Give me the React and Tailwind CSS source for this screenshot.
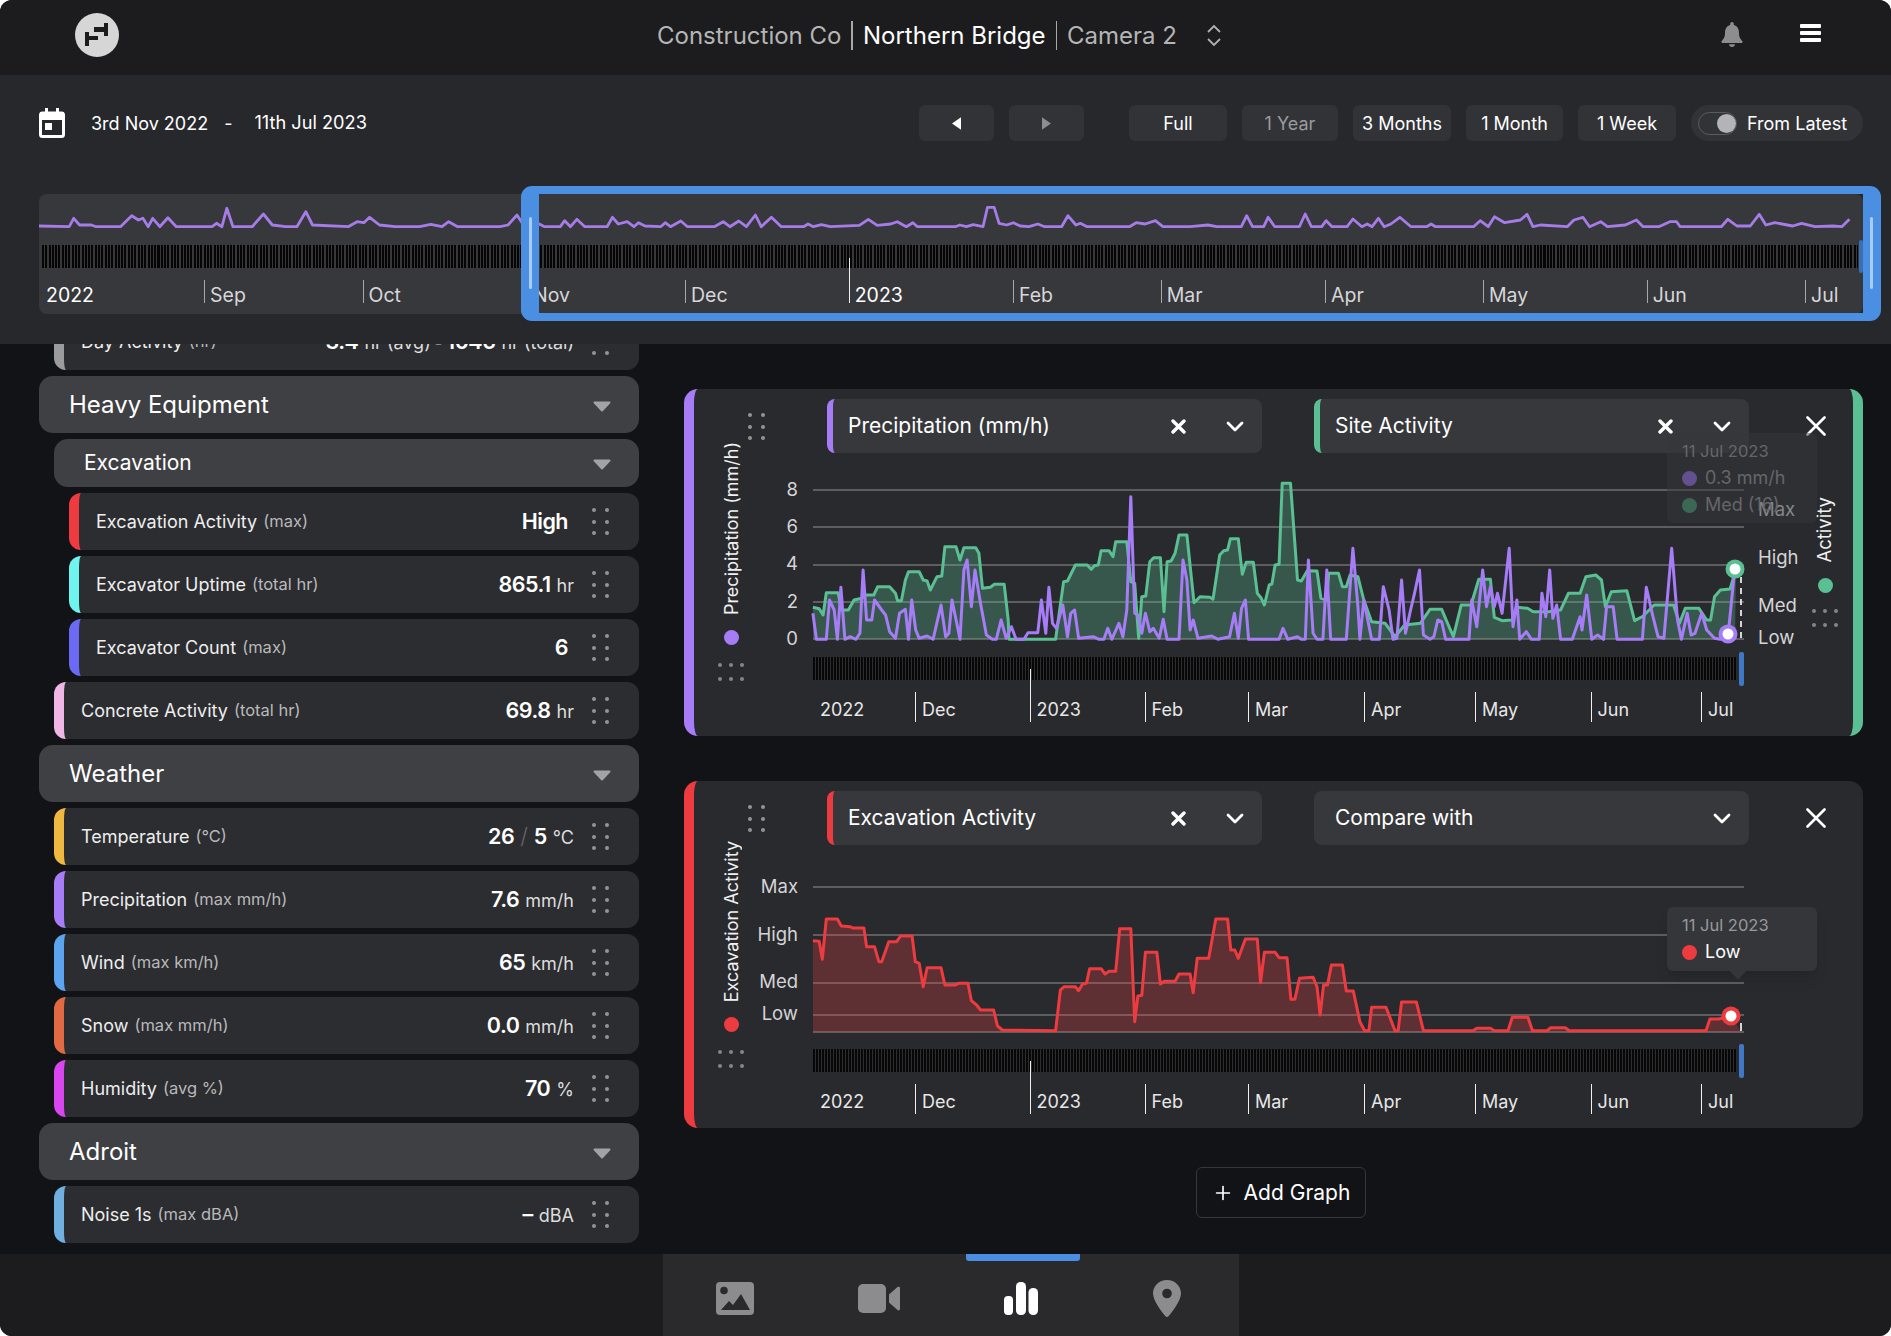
import React from 'react'
import { Plus } from 'lucide-react'

// traced series, written as "x,y x,y" and shifted into the svg's own coordinates
const trace = (str, ox, fx, oy) =>
  str.trim().split(/\s+/).map(p => {
    const [x, y] = p.split(',').map(Number)
    return [+(ox + x / fx).toFixed(1), +(y / 3 - oy).toFixed(1)]
  })
const toPts = arr => arr.map(p => p.join(',')).join(' ')

const previewLine = [
  ...trace('87,678 155,680 165,655 178,675 205,675 215,680 270,680 295,647 310,660 320,655 332,680 342,655 358,680 376,653 395,680 475,680 485,670 497,680 508,625 522,680 565,680 590,642 610,675 640,680 665,680 685,635 700,675 780,680 800,665 815,668 828,652 850,675 885,680 940,680 965,673 990,680 1005,665 1025,680 1120,680', -39, 2.24, 194),
  ...trace('0,680 18,675 38,645 55,680 85,670 100,680 135,680 145,662 158,680 172,658 190,680 240,680 252,652 265,672 285,665 300,680 310,668 325,678 360,680 370,668 382,680 405,663 420,680 480,680 500,665 515,680 535,663 552,680 572,645 585,680 608,652 630,680 680,680 690,672 702,680 720,674 740,680 805,676 825,658 845,676 875,672 890,665 910,680 925,668 935,680 1020,680 1030,675 1045,680 1060,674 1082,680 1092,622 1107,622 1118,670 1135,675 1150,668 1165,678 1185,680 1205,672 1220,680 1258,680 1272,647 1290,675 1300,670 1315,680 1410,680 1425,668 1445,672 1468,662 1485,680 1545,680', 461, 2.24, 194),
  ...trace('0,680 40,675 60,680 115,680 127,647 140,680 165,680 175,652 190,680 245,680 258,642 272,680 295,680 305,662 318,680 352,680 365,657 385,680 397,672 408,680 422,655 435,680 450,672 470,652 495,680 530,680 540,672 550,680 635,680 650,662 668,680 682,650 705,668 740,660 755,643 768,680 785,675 845,680 860,660 880,652 895,680 920,665 935,680 975,675 1000,660 1015,680 1050,680 1075,665 1090,665 1098,680 1190,680 1205,658 1225,678 1255,678 1275,643 1290,675 1310,668 1350,678 1370,670 1400,680 1440,678 1460,680 1477,658', 1151, 2.24, 194),
]

const siteActivity = [
  ...trace('336,682 352,686 362,705 370,638 400,638 408,690 426,690 440,660 460,655 470,645 490,645 500,620 530,620 545,640 550,662 560,662 570,600 578,575 605,575 615,600 625,603 633,630 650,590 662,588 670,500 698,500 708,540 718,503 748,503 756,520 765,625 785,622 795,613 820,613 830,720 832,778 950,778 970,605 980,603 1000,555 1030,555 1040,568 1048,557 1058,555 1065,512 1085,512 1095,530 1102,485 1130,485 1140,605 1150,610 1160,775 1168,650 1178,648 1188,545 1198,533 1215,533 1224,695 1232,545 1242,543 1252,520 1262,465 1282,465 1300,668 1315,650 1340,652 1348,658 1365,525 1375,512 1385,510 1392,476 1412,476 1422,583 1432,547 1450,547 1460,640 1470,655 1478,675 1490,615 1497,612 1505,555 1515,553 1523,310 1544,310', -133, 2.529, 73),
  ...trace('45,600 55,603 70,572 95,573 105,655 120,660 125,580 150,580 160,620 170,620 180,585 200,590 215,660 235,725 270,730 295,770 320,735 360,730 385,688 415,688 430,730 445,770 465,675 490,675 510,598 540,598 550,712 570,722 595,720 610,682 635,685 650,695 690,695 720,690 740,640 770,640 785,590 810,585 825,600 835,680 850,635 890,632 910,722 930,710 960,675 975,675 1010,675 1025,730 1040,685 1075,685 1095,720 1105,720 1115,650 1130,630 1155,627 1170,568', 467, 2.566, 73),
]

const precipitation = [
  ...trace('336,700 345,778 370,778 378,660 390,690 398,778 407,622 417,778 430,770 445,778 455,760 463,570 472,720 485,720 492,660 510,690 520,705 530,755 545,775 555,700 570,688 578,778 586,660 596,750 605,775 625,768 640,778 660,675 672,770 680,760 688,660 708,778 718,570 726,540 737,680 746,570 760,670 775,765 790,778 800,778 812,720 825,775 838,740 850,778 870,778 880,758 905,758 914,660 925,760 933,622 942,730 952,745 968,675 980,770 988,700 998,690 1008,775 1045,770 1060,778 1072,778 1082,745 1092,778 1110,730 1120,770 1130,690 1140,350 1150,700 1158,705 1168,760 1177,700 1188,755 1197,745 1212,775 1222,718 1232,778 1262,778 1272,540 1282,600 1290,750 1298,720 1310,775 1345,768 1360,778 1390,770 1402,700 1412,775 1420,685 1430,660 1438,778 1515,778 1525,745 1537,778', -133, 2.529, 73),
  ...trace('45,770 55,778 65,778 73,540 85,760 95,778 110,778 120,570 130,778 170,778 187,505 200,680 205,778 215,660 235,778 255,778 265,620 280,690 290,778 300,775 312,600 322,760 335,690 345,640 358,570 368,765 385,778 395,770 405,720 415,725 425,778 485,778 492,660 505,740 520,570 530,680 540,620 550,680 558,640 570,700 588,505 598,740 608,660 615,778 632,755 645,778 665,778 672,640 682,710 692,570 700,715 710,675 720,778 750,778 770,710 775,750 787,645 800,778 815,765 830,778 838,680 855,680 865,778 930,778 940,622 955,700 970,770 985,775 1005,505 1020,720 1030,778 1045,700 1055,765 1065,760 1082,700 1095,750 1115,775 1130,778 1150,762 1165,590', 467, 2.566, 73),
]

const excavation = [
  ...trace('336,512 352,514 360,568 370,447 398,447 408,468 430,470 437,474 465,474 472,530 492,530 503,575 510,575 528,515 548,515 558,498 587,498 595,575 605,580 615,650 625,593 660,593 670,645 695,645 705,640 728,640 737,692 750,705 760,720 793,720 803,768 815,780 950,782 962,660 972,650 1000,650 1008,662 1018,642 1028,640 1036,596 1065,596 1075,612 1085,604 1102,604 1112,476 1140,476 1150,755 1158,678 1168,676 1177,547 1206,547 1215,642 1225,634 1252,634 1262,612 1290,612 1298,668 1308,565 1337,565 1355,447 1385,447 1393,540 1403,540 1412,565 1430,507 1460,507 1468,638 1478,547 1505,547 1515,563 1535,563 1545,688 1555,688', -133, 2.529, 75),
  ...trace('50,625 85,622 95,650 103,735 112,645 122,645 132,585 160,585 170,663 188,663 205,755 217,782 228,782 235,712 272,712 295,782 303,782 312,696 350,696 368,782 495,782 505,775 540,775 550,782 585,782 596,742 636,742 648,782 685,782 695,773 732,773 742,782 1093,782 1103,747 1125,747 1158,738', 467, 2.566, 75),
]

const previewTicks = [
  { x: 165, label: 'Sep' }, { x: 323.5, label: 'Oct' }, { x: 488, label: 'Nov' }, { x: 646, label: 'Dec' },
  { x: 809.7, label: '2023', year: true }, { x: 974, label: 'Feb' }, { x: 1121.7, label: 'Mar' }, { x: 1286, label: 'Apr' },
  { x: 1444, label: 'May' }, { x: 1607.7, label: 'Jun' }, { x: 1766, label: 'Jul' },
]

const chartTicks = [
  { x: 102, label: 'Dec' }, { x: 216.5, label: '2023', year: true }, { x: 331.6, label: 'Feb' }, { x: 435, label: 'Mar' },
  { x: 551, label: 'Apr' }, { x: 662, label: 'May' }, { x: 777.6, label: 'Jun' }, { x: 888, label: 'Jul' },
]

const rangeButtons = [
  { label: 'Full', w: 'w-[98px]', text: 'text-white' },
  { label: '1 Year', w: 'w-[96px]', text: 'text-[#9a9a9c]' },
  { label: '3 Months', w: 'w-[98px]', text: 'text-white' },
  { label: '1 Month', w: 'w-[97px]', text: 'text-white' },
  { label: '1 Week', w: 'w-[98px]', text: 'text-white' },
]

const Grip = () => (
  <div className="w-fit grid grid-cols-2 gap-x-[9px] gap-y-[7.5px]">
    {[0, 1, 2, 3, 4, 5].map(i => <span key={i} className="w-[4px] h-[4px] rounded-full bg-[#949496]" />)}
  </div>
)

const GripWide = () => (
  <div className="w-fit grid grid-cols-3 gap-x-[7px] gap-y-[10px]">
    {[0, 1, 2, 3, 4, 5].map(i => <span key={i} className="w-[4px] h-[4px] rounded-full bg-[#858587]" />)}
  </div>
)

const Caret = () => (
  <svg width="18" height="11" viewBox="0 0 18 11" className="mt-[3px]"><path d="M1.5 1.5h15L9 9.5z" fill="#a3a3a5" stroke="#a3a3a5" strokeWidth="2" strokeLinejoin="round" /></svg>
)

const Category = ({ label }) => (
  <div className="h-[57px] shrink-0 rounded-[14px] bg-[#3f4043] flex items-center justify-between pl-[30px] pr-[28px]">
    <span className="text-[24px] text-white">{label}</span>
    <Caret />
  </div>
)

const Row = ({ indent = 'ml-[15px]', accent, label, sub, children, bare }) => (
  <div className={`h-[57px] shrink-0 rounded-[12px] bg-[#2c2d30] border-l-[10px] ${accent} ${indent} flex items-center pl-[17px] pr-[30px]`}>
    <span className="text-[18px] text-[#eeeeee] whitespace-nowrap">{label}</span>
    <span className="ml-[6px] text-[16.5px] text-[#b9b9bb] whitespace-nowrap">{sub}</span>
    <div className={`ml-auto flex items-baseline whitespace-nowrap ${bare ? 'mr-[6px]' : ''}`}>{children}</div>
    <div className="ml-[18px] shrink-0"><Grip /></div>
  </div>
)

const Val = ({ children }) => <span className="text-[21.5px] font-semibold text-white tracking-[-0.5px]">{children}</span>
const Unit = ({ children }) => <span className="ml-[6px] text-[18px] text-[#dddddd]">{children}</span>

const SelectorX = () => (
  <svg width="15" height="15" viewBox="0 0 15 15" className="shrink-0"><path d="M2 2l11 11M13 2L2 13" stroke="#fff" strokeWidth="3.4" strokeLinecap="round" /></svg>
)
const Chevron = () => (
  <svg width="18" height="11" viewBox="0 0 18 11" className="shrink-0"><path d="M2 2l7 7 7-7" fill="none" stroke="#fff" strokeWidth="2.8" strokeLinecap="round" strokeLinejoin="round" /></svg>
)

const Selector = ({ label, accent, clearable = true }) => (
  <div className={`w-[435px] h-[54px] shrink-0 rounded-[8px] bg-[#37383c] flex items-center pr-[18px] ${accent ? `border-l-[6px] ${accent} pl-[15px]` : 'pl-[21px]'}`}>
    <span className="text-[21px] text-white flex-1">{label}</span>
    {clearable && <SelectorX />}
    <span className="ml-[40px]"><Chevron /></span>
  </div>
)

const CloseX = () => (
  <svg width="20" height="20" viewBox="0 0 20 20"><path d="M1.5 1.5l17 17M18.5 1.5l-17 17" stroke="#fff" strokeWidth="2.6" strokeLinecap="round" /></svg>
)

const Gridlines = ({ ys }) => ys.map(y => <line key={y} x1="0" x2="931" y1={y} y2={y} stroke="#5e5e60" strokeWidth="1.8" />)

const Marker = ({ x, y, color }) => (
  <g>
    <circle cx={x} cy={y} r="9.5" fill={color} />
    <circle cx={x} cy={y} r="5.5" fill="#fff" />
  </g>
)

const PrecipPlot = () => (
  <svg width="931" height="204" className="block overflow-visible">
    <Gridlines ys={[37, 74, 112, 149, 186]} />
    <polygon points={`0,186 ${toPts(siteActivity)} 922,186`} fill="#5abf93" fillOpacity="0.3" />
    <polyline points={toPts(siteActivity)} fill="none" stroke="#5abf93" strokeWidth="3" strokeLinejoin="round" />
    <polyline points={toPts(precipitation)} fill="none" stroke="#a67cf7" strokeWidth="3" strokeLinejoin="round" />
    <line x1="928" x2="928" y1="124" y2="186" stroke="#fff" strokeWidth="1.6" strokeDasharray="6 5" />
    <Marker x={922} y={116} color="#5abf93" />
    <Marker x={915} y={181} color="#a67cf7" />
  </svg>
)

const ExcavationPlot = () => (
  <svg width="931" height="204" className="block overflow-visible">
    <Gridlines ys={[42, 90, 138, 170, 187]} />
    <polygon points={`0,187 ${toPts(excavation)} 928,187`} fill="#ef4444" fillOpacity="0.27" />
    <polyline points={toPts(excavation)} fill="none" stroke="#ee3b40" strokeWidth="3" strokeLinejoin="round" />
    <line x1="928" x2="928" y1="178" y2="186" stroke="#fff" strokeWidth="1.6" />
    <Marker x={918} y={171} color="#ee3b40" />
  </svg>
)

const TimeAxis = () => (
  <div className="relative h-[42px]">
    <span className="absolute left-[7px] top-[19px] text-[18px] leading-[22px] text-[#e6e6e6]">2022</span>
    {chartTicks.map(t => (
      <React.Fragment key={t.label}>
        <span
          className={`absolute w-px bg-[#f0f0f0] ${t.year ? 'top-[-11px] h-[53px]' : 'top-[12px] h-[30px]'}`}
          style={{ left: t.x }}
        />
        <span className="absolute top-[19px] text-[18px] leading-[22px] text-[#e6e6e6]" style={{ left: t.x + 7 }}>{t.label}</span>
      </React.Fragment>
    ))}
  </div>
)

const Stripes = () => (
  <div className="h-[23px] mr-[8px] bg-[repeating-linear-gradient(90deg,#070707_0,#070707_2px,#2e2e30_2px,#2e2e30_3px)]" />
)

const YLabel = ({ y, side, children }) => (
  <span
    className={`absolute -translate-y-1/2 text-[18.5px] text-[#d4d4d6] whitespace-nowrap ${side === 'left' ? 'right-full mr-[15px]' : 'left-full ml-[14px]'}`}
    style={{ top: y }}
  >
    {children}
  </span>
)

const RailLabel = ({ text, dot, pad }) => (
  <div className={`flex-1 flex flex-col items-center justify-end ${pad}`}>
    <span className="[writing-mode:vertical-rl] rotate-180 text-[18px] text-[#f0f0f0] whitespace-nowrap">{text}</span>
    <span className={`mt-[15px] w-[15px] h-[15px] rounded-full ${dot}`} />
    <div className="mt-[18px]"><GripWide /></div>
  </div>
)

const GraphCard = ({ accent, rail, selectors, plot, labels, right, tooltip }) => (
  <div className={`relative h-[347px] shrink-0 rounded-[14px] bg-[#292a2e] flex border-l-[10px] ${accent}`}>
    <div className="w-[119px] shrink-0 flex flex-col">
      <div className="pl-[54px] pt-[24px]"><Grip /></div>
      <div className="w-[74px] flex-1 flex flex-col">{rail}</div>
    </div>
    <div className="w-[931px] shrink-0 flex flex-col">
      <div className="mt-[10px] pl-[14px] flex gap-[52px]">{selectors}</div>
      <div className="relative">
        {plot}
        {labels}
        <span className="absolute left-[926px] top-[199px] w-[5px] h-[34px] rounded-[2px] bg-[#3f78c4]" />
      </div>
      <Stripes />
      <TimeAxis />
    </div>
    {right}
    {tooltip}
  </div>
)

const CalendarIcon = () => (
  <svg width="26" height="30" viewBox="0 0 26 30" fill="none">
    <rect x="1.5" y="5" width="23" height="23.5" rx="2" stroke="#fff" strokeWidth="3" />
    <rect x="1" y="4" width="24" height="8" fill="#fff" />
    <rect x="6" y="0" width="3" height="5" fill="#fff" />
    <rect x="17" y="0" width="3" height="5" fill="#fff" />
    <rect x="6" y="15" width="7" height="7" fill="#fff" />
  </svg>
)

const Logo = () => (
  <svg width="44" height="44" viewBox="0 0 44 44">
    <circle cx="22" cy="22" r="22" fill="#d6d6d6" />
    <path d="M19 14h10v-4h4v13h-4v-4H19zM10 19h4v4h9v4h-9v6h-4z" fill="#1c1c1e" />
  </svg>
)

const Bell = () => (
  <svg width="22" height="25" viewBox="0 0 22 25" fill="#8d8d8f">
    <path d="M11 0c1.1 0 1.8.9 1.8 2v1.1C16.300 4 18 7 18 11c0 4.500 1.500 6 3.400 8.200.5.600.2 1.800-.9 1.800H1.500C.4 21 .1 19.800.6 19.200 2.500 17 4 15.500 4 11c0-4 1.700-7 5.200-7.900V2C9.200.9 9.900 0 11 0z" />
    <path d="M8 22.200h6c0 1.500-1.300 2.800-3 2.800s-3-1.300-3-2.800z" />
  </svg>
)

const ImageIcon = () => (
  <svg width="38" height="33" viewBox="0 0 38 33" className="block">
    <rect width="38" height="33" rx="4" fill="#8c8c8e" />
    <circle cx="8" cy="8.500" r="3.800" fill="#2a2a2c" />
    <path d="M5 28l8-9 4 4 8-11 9 16z" fill="#2a2a2c" />
  </svg>
)

const VideoIcon = () => (
  <svg width="42" height="29" viewBox="0 0 42 29" fill="#8c8c8e" className="block">
    <rect width="28" height="29" rx="5" />
    <path d="M31 10.500L39.500 3c1-.8 2.500-.2 2.500 1v21c0 1.300-1.500 1.800-2.500 1L31 18.500z" />
  </svg>
)

const BarsIcon = () => (
  <svg width="34" height="33" viewBox="0 0 34 33" fill="#fff" className="block">
    <rect y="14" width="9" height="19" rx="4" />
    <rect x="12" width="10" height="33" rx="4.500" />
    <rect x="24.500" y="6" width="9.500" height="27" rx="4.500" />
  </svg>
)

const PinIcon = () => (
  <svg width="28" height="37" viewBox="0 0 28 37" className="block">
    <path d="M14 0C6 0 0 6 0 13.500c0 7 9 19 12.500 22.800.8.900 2.200.900 3 0C19 32.500 28 20.500 28 13.500 28 6 22 0 14 0z" fill="#8c8c8e" />
    <circle cx="14" cy="13.500" r="4.800" fill="#2a2a2c" />
  </svg>
)

export default function App() {
  return (
    <div className="h-screen bg-white font-['Inter',sans-serif]">
      <div className="h-full rounded-[12px] overflow-hidden bg-[#121316] flex flex-col">
        {/* Top bar */}
        <header className="h-[75px] shrink-0 bg-[#1c1c1e] relative flex items-center justify-center">
          <div className="absolute left-[75px] top-[13px]"><Logo /></div>
          <div className="flex items-center text-[24px] ml-[-12px] mt-[-4px]">
            <span className="text-[#b5b5b5]">Construction Co</span>
            <span className="mx-[10px] w-[1.5px] h-[29px] bg-[#a8a8a8]" />
            <span className="text-white">Northern Bridge</span>
            <span className="mx-[10px] w-[1.5px] h-[29px] bg-[#a8a8a8]" />
            <span className="text-[#b5b5b5]">Camera 2</span>
            <svg width="16" height="23" viewBox="0 0 16 23" fill="none" className="ml-[29px]">
              <path d="M2 8l6-6 6 6M2 15l6 6 6-6" stroke="#b0b0b0" strokeWidth="1.8" />
            </svg>
          </div>
          <div className="absolute left-[1721px] top-[22px]"><Bell /></div>
          <div className="absolute left-[1800px] top-[24px] w-[21px] flex flex-col gap-[3.500px]">
            <span className="h-[3.500px] rounded-[1px] bg-white" />
            <span className="h-[3.500px] rounded-[1px] bg-white" />
            <span className="h-[3.500px] rounded-[1px] bg-white" />
          </div>
        </header>

        {/* Range panel */}
        <section className="h-[269px] shrink-0 relative z-10 bg-[#27282c] pl-[39px] pr-[28px] pt-[30px]">
          <div className="h-[36px] flex items-center">
            <CalendarIcon />
            <span className="ml-[26px] text-[18px] text-white">3rd Nov 2022</span>
            <span className="ml-[16px] text-[18px] text-white">-</span>
            <span className="ml-[22px] text-[18.2px] text-white">11th Jul 2023</span>
            <div className="ml-auto flex items-center gap-[15px]">
              <button className="w-[75px] h-[36px] rounded-[6px] bg-[#323337] flex items-center justify-center">
                <svg width="9" height="13" viewBox="0 0 8 11"><path d="M8 0v11L0 5.500z" fill="#fff" /></svg>
              </button>
              <button className="w-[75px] h-[36px] rounded-[6px] bg-[#323337] flex items-center justify-center mr-[30px]">
                <svg width="9" height="13" viewBox="0 0 8 11"><path d="M0 0v11l8-5.500z" fill="#8d8d8f" /></svg>
              </button>
              {rangeButtons.map(b => (
                <button key={b.label} className={`${b.w} h-[36px] rounded-[6px] bg-[#323337] text-[18px] ${b.text}`}>{b.label}</button>
              ))}
              <div className="h-[36px] w-[172px] rounded-full bg-[#323337] flex items-center pl-[7px]">
                <span className="w-[39px] h-[23px] rounded-full border border-[#5c5c5e] flex items-center justify-end">
                  <span className="w-[19px] h-[19px] rounded-full bg-[#b4b4b6]" />
                </span>
                <span className="ml-[10px] text-[18px] text-white whitespace-nowrap">From Latest</span>
              </div>
            </div>
          </div>

          <div className="relative mt-[53px] h-[120px] rounded-[8px] bg-[#37383c] flex flex-col">
            <svg width="1823" height="51" className="block shrink-0">
              <polyline points={toPts(previewLine)} fill="none" stroke="#a67ce8" strokeWidth="2.8" strokeLinejoin="round" />
            </svg>
            <div className="h-[23px] shrink-0 ml-[3px] mr-[5px] bg-[repeating-linear-gradient(90deg,#050505_0,#050505_2px,#38383a_2px,#38383a_3.300px)]" />
            <div className="relative flex-1">
              <span className="absolute left-[7px] top-[15px] text-[19.5px] leading-[24px] text-white">2022</span>
              {previewTicks.map(t => (
                <React.Fragment key={t.label}>
                  <span
                    className={`absolute w-px ${t.year ? 'top-[-10px] h-[45px] bg-[#f0f0f0]' : 'top-[12px] h-[23px] bg-[#a8a8aa]'}`}
                    style={{ left: t.x }}
                  />
                  <span
                    className={`absolute top-[15px] text-[19.5px] leading-[24px] ${t.year ? 'text-white' : 'text-[#d6d6d8]'}`}
                    style={{ left: t.x + 6 }}
                  >
                    {t.label}
                  </span>
                </React.Fragment>
              ))}
            </div>
            {/* Selected range */}
            <div className="absolute left-[482px] top-[-8px] w-[1360px] h-[135px] rounded-[11px] border-[#4a8fe2] border-x-[18px] border-t-[8px] border-b-[8px]">
              <span className="absolute left-[-10px] top-[23px] w-[3px] h-[72px] rounded-full bg-[#a8cdf4]" />
              <span className="absolute right-[-10px] top-[23px] w-[3px] h-[72px] rounded-full bg-[#a8cdf4]" />
              <span className="absolute right-[0px] top-[46px] w-[4px] h-[33px] rounded-[2px] bg-[#3a6fb4]" />
            </div>
          </div>
        </section>

        {/* Body */}
        <div className="flex-1 min-h-0 flex overflow-hidden">
          <aside className="w-[639px] shrink-0 pl-[39px] overflow-hidden">
            <div className="mt-[-31px] flex flex-col gap-[6px]">
              <Row accent="border-[#9b9b9d]" label="Day Activity" sub="(hr)">
                <Val>3.4</Val><Unit>hr (avg)</Unit>
                <span className="mx-[4px] text-[#888]">-</span>
                <Val>1046</Val><Unit>hr (total)</Unit>
              </Row>
              <Category label="Heavy Equipment" />
              <div className="ml-[15px] h-[48px] shrink-0 rounded-[14px] bg-[#3f4043] flex items-center justify-between pl-[30px] pr-[28px]">
                <span className="text-[21px] text-white">Excavation</span>
                <Caret />
              </div>
              <Row indent="ml-[30px]" accent="border-[#ee3b40]" label="Excavation Activity" sub="(max)" bare><Val>High</Val></Row>
              <Row indent="ml-[30px]" accent="border-[#6ff5f0]" label="Excavator Uptime" sub="(total hr)"><Val>865.1</Val><Unit>hr</Unit></Row>
              <Row indent="ml-[30px]" accent="border-[#6a6af4]" label="Excavator Count" sub="(max)" bare><Val>6</Val></Row>
              <Row accent="border-[#f0b6e6]" label="Concrete Activity" sub="(total hr)"><Val>69.8</Val><Unit>hr</Unit></Row>
              <Category label="Weather" />
              <Row accent="border-[#efb93f]" label="Temperature" sub="(°C)">
                <Val>26</Val><span className="mx-[6px] text-[22px] font-light text-[#66666a]">/</span><Val>5</Val><Unit>°C</Unit>
              </Row>
              <Row accent="border-[#a67cf7]" label="Precipitation" sub="(max mm/h)"><Val>7.6</Val><Unit>mm/h</Unit></Row>
              <Row accent="border-[#5ba4f0]" label="Wind" sub="(max km/h)"><Val>65</Val><Unit>km/h</Unit></Row>
              <Row accent="border-[#e26a42]" label="Snow" sub="(max mm/h)"><Val>0.0</Val><Unit>mm/h</Unit></Row>
              <Row accent="border-[#d946ef]" label="Humidity" sub="(avg %)"><Val>70</Val><Unit>%</Unit></Row>
              <Category label="Adroit" />
              <Row accent="border-[#6fb0e0]" label="Noise 1s" sub="(max dBA)"><Val>–</Val><Unit>dBA</Unit></Row>
            </div>
          </aside>

          <main className="flex-1 min-w-0 pl-[45px] pr-[28px] pt-[45px] flex flex-col gap-[45px]">
            <GraphCard
              accent="border-[#a67cf7]"
              rail={<RailLabel text="Precipitation (mm/h)" dot="bg-[#a67cf7]" pad="pb-[55px]" />}
              selectors={<><Selector label="Precipitation (mm/h)" accent="border-[#a67cf7]" /><Selector label="Site Activity" accent="border-[#5abf93]" /></>}
              plot={<PrecipPlot />}
              labels={<>
                {[['8', 37], ['6', 74], ['4', 111], ['2', 149], ['0', 186]].map(([t, y]) => <YLabel key={t} y={y} side="left">{t}</YLabel>)}
                {[['Max', 57], ['High', 105], ['Med', 153], ['Low', 185]].map(([t, y]) => <YLabel key={t} y={y} side="right">{t}</YLabel>)}
              </>}
              right={
                <div className="flex-1 min-w-0 flex flex-col items-end border-r-[10px] border-[#5abf93] rounded-r-[14px]">
                  <div className="mt-[27px] mr-[27px]"><CloseX /></div>
                  <div className="mt-[61px] mr-[13px] w-[30px] flex flex-col items-center">
                    <span className="[writing-mode:vertical-rl] rotate-180 text-[18.5px] text-[#f0f0f0]">Activity</span>
                    <span className="mt-[15px] w-[15px] h-[15px] rounded-full bg-[#5abf93]" />
                    <div className="mt-[16px]"><GripWide /></div>
                  </div>
                </div>
              }
              tooltip={
                <div className="absolute left-[973px] top-[44px] w-[150px] h-[90px] rounded-[6px] bg-[#35363a]/50 pl-[15px] pt-[7px] text-[#66666a]">
                  <div className="text-[16.5px] leading-[22px]">11 Jul 2023</div>
                  <div className="mt-[5px] text-[18px] leading-[22px] flex items-center"><span className="w-[15px] h-[15px] rounded-full bg-[#63508f] mr-[8px]" />0.3 mm/h</div>
                  <div className="mt-[5px] text-[18px] leading-[22px] flex items-center"><span className="w-[15px] h-[15px] rounded-full bg-[#3c6656] mr-[8px]" />Med (16)</div>
                </div>
              }
            />
            <GraphCard
              accent="border-[#ee3b40]"
              rail={<RailLabel text="Excavation Activity" dot="bg-[#ee3b40]" pad="pb-[60px]" />}
              selectors={<><Selector label="Excavation Activity" accent="border-[#ee3b40]" /><Selector label="Compare with" clearable={false} /></>}
              plot={<ExcavationPlot />}
              labels={[['Max', 42], ['High', 90], ['Med', 137], ['Low', 169]].map(([t, y]) => <YLabel key={t} y={y} side="left">{t}</YLabel>)}
              right={
                <div className="flex-1 min-w-0 flex flex-col items-end pr-[10px]">
                  <div className="mt-[27px] mr-[27px]"><CloseX /></div>
                </div>
              }
              tooltip={
                <div className="absolute left-[973px] top-[126px] w-[150px] h-[64px] rounded-[6px] bg-[#35363a] shadow-lg pl-[15px] pt-[7px]">
                  <div className="text-[16.5px] leading-[22px] text-[#98989c]">11 Jul 2023</div>
                  <div className="mt-[5px] text-[18px] leading-[22px] flex items-center text-white"><span className="w-[15px] h-[15px] rounded-full bg-[#ee3b40] mr-[8px]" />Low</div>
                  <span className="absolute left-[65px] top-[58px] w-[12px] h-[12px] rotate-45 bg-[#35363a]" />
                </div>
              }
            />
            <button className="self-center ml-[15px] mt-[-6px] w-[170px] h-[51px] rounded-[6px] border border-[#36373b] flex items-center justify-center gap-[10px] text-[21px] text-white">
              <Plus size={22} strokeWidth={1.8} />
              Add Graph
            </button>
          </main>
        </div>

        {/* Bottom tabs */}
        <nav className="h-[82px] shrink-0 bg-[#1c1c1e] flex justify-center">
          <div className="w-[576px] ml-[11px] bg-[#2a2a2c] relative flex items-center pt-[6px]">
            <span className="absolute left-[303px] top-0 w-[114px] h-[7px] rounded-b-[3px] bg-[#4a8fe2]" />
            <span className="ml-[53px]"><ImageIcon /></span>
            <span className="ml-[104px]"><VideoIcon /></span>
            <span className="ml-[104px]"><BarsIcon /></span>
            <span className="ml-[115px]"><PinIcon /></span>
          </div>
        </nav>
      </div>
    </div>
  )
}
